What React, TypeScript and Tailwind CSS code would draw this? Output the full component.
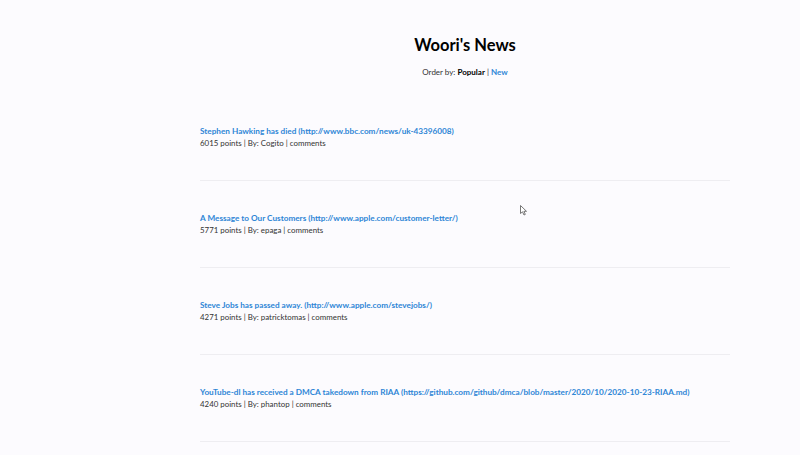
const stories = [
  {
    title: 'Stephen Hawking has died',
    url: 'http://www.bbc.com/news/uk-43396008',
    points: 6015,
    by: 'Cogito',
  },
  {
    title: 'A Message to Our Customers',
    url: 'http://www.apple.com/customer-letter/',
    points: 5771,
    by: 'epaga',
  },
  {
    title: 'Steve Jobs has passed away.',
    url: 'http://www.apple.com/stevejobs/',
    points: 4271,
    by: 'patricktomas',
  },
  {
    title: 'YouTube-dl has received a DMCA takedown from RIAA',
    url: 'https://github.com/github/dmca/blob/master/2020/10/2020-10-23-RIAA.md',
    points: 4240,
    by: 'phantop',
  },
];

export default function App() {
  return (
    <div
      className="relative h-[455px] overflow-hidden bg-[#fcfbfe] text-[#333]"
      style={{ fontFamily: 'Lato, "Open Sans", sans-serif' }}
    >
      <header className="ml-[200px] w-[530px] pt-[33px] text-center">
        <h1 className="text-[16.5px] font-bold leading-[24px] text-black">Woori&apos;s News</h1>
        <p className="mt-[9px] text-[8px] leading-[12px]">
          Order by: <b className="text-black">Popular</b> |{' '}
          <a className="font-bold text-[#2e86d6]">New</a>
        </p>
      </header>

      <ul className="ml-[200px] mt-[16px] w-[530px]">
        {stories.map((s) => (
          <li key={s.points} className="border-b border-[#eeedf1] py-[31px] leading-[12px]">
            <a className="block whitespace-nowrap text-[8.2px] font-bold text-[#2e86d6]">
              {s.title} ({s.url})
            </a>
            <div className="text-[7.9px]">
              {s.points} points | By: {s.by} | comments
            </div>
          </li>
        ))}
      </ul>

      {/* mouse pointer left in the capture */}
      <svg className="absolute left-[520px] top-[205px]" width="8" height="11" viewBox="0 0 8 11">
        <path d="M0.5 0.5 L0.5 8.5 L2.5 6.8 L4 10 L5.3 9.4 L3.9 6.3 L6.5 6.3 Z" fill="#fff" stroke="#555" strokeWidth="0.8" />
      </svg>
    </div>
  );
}
